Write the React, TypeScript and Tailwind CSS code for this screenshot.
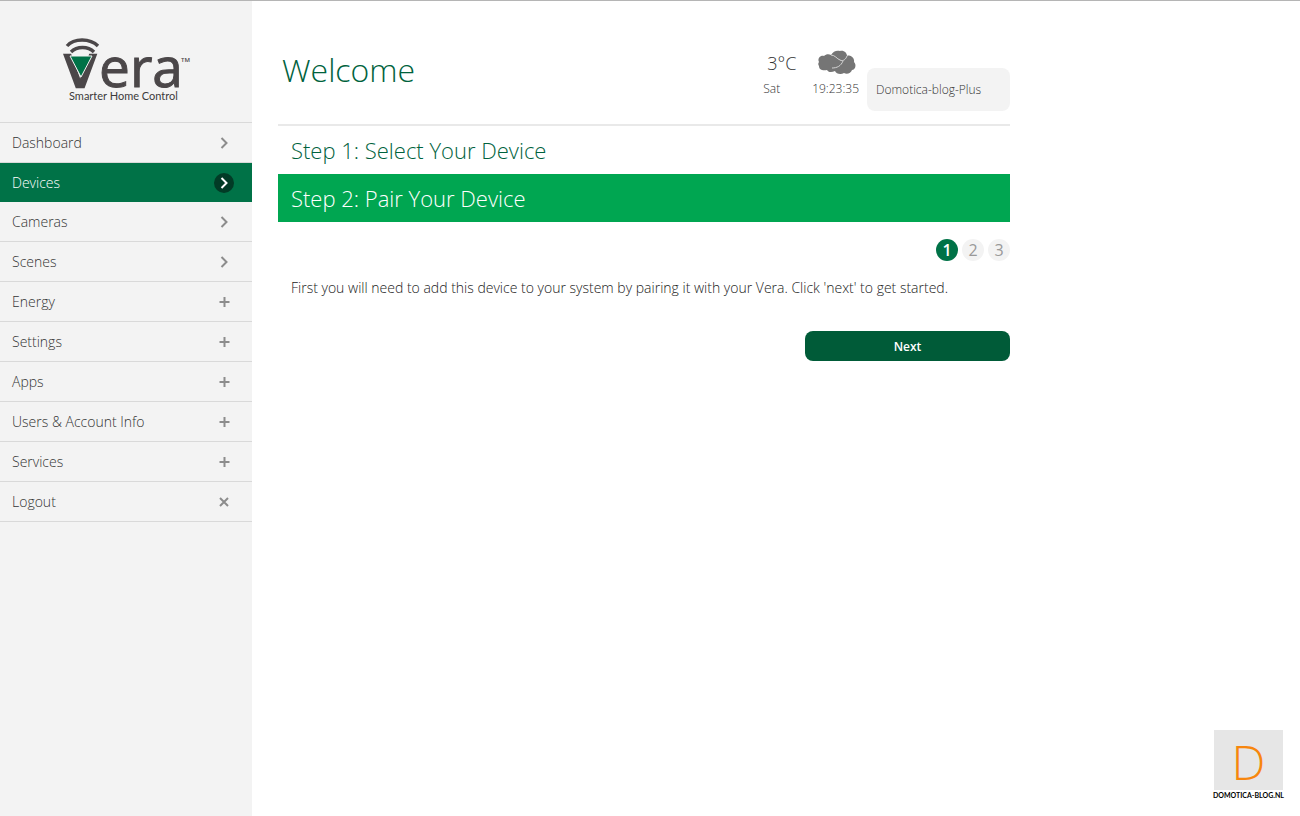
import clsx from "clsx";

type NavIcon = "arrow" | "plus" | "close";

interface NavItem {
  label: string;
  icon: NavIcon;
  active?: boolean;
}

const navItems: NavItem[] = [
  { label: "Dashboard", icon: "arrow" },
  { label: "Devices", icon: "arrow", active: true },
  { label: "Cameras", icon: "arrow" },
  { label: "Scenes", icon: "arrow" },
  { label: "Energy", icon: "plus" },
  { label: "Settings", icon: "plus" },
  { label: "Apps", icon: "plus" },
  { label: "Users & Account Info", icon: "plus" },
  { label: "Services", icon: "plus" },
  { label: "Logout", icon: "close" },
];

const iconPaths: Record<NavIcon, string> = {
  arrow: "M7.5 5 L12.5 10 L7.5 15",
  plus: "M10.5 5 V15 M5.5 10 H15.5",
  close: "M6 6 L14 14 M14 6 L6 14",
};

function VeraLogo() {
  return (
    <svg
      width="130"
      height="66"
      viewBox="0 0 130 66"
      className="overflow-visible"
      role="img"
      aria-label="Vera Smarter Home Control"
    >
      {/* Signal waves */}
      <g fill="none" stroke="#4b4749" strokeWidth="3.4">
        <path d="M6 9 C13 1 29 1 37 9" />
        <path d="M10 15 C16 9 27 9 33 15" />
      </g>
      <g fill="#4b4749" stroke="#4b4749" fontWeight="400">
        <text x="2" y="50" fontFamily="DejaVu Sans" fontSize="58" strokeWidth="2.4">v</text>
        <text x="38" y="50" fontFamily="Open Sans" fontSize="55" strokeWidth="1">era</text>
      </g>
      <path d="M9 19 H31 L20 40 Z" fill="#007247" stroke="#f3f3f3" strokeWidth="1" />
      <text x="120" y="25" fontFamily="Open Sans" fontSize="6" fontWeight="600" fill="#4b4749">TM</text>
      <text x="8" y="63" fontFamily="Lato" fontSize="11" fontWeight="400" fill="#3c3a3b">Smarter Home Control</text>
    </svg>
  );
}

function CloudIcon() {
  return (
    <svg width="40" height="26" viewBox="0 0 40 26" aria-hidden="true">
      <path
        d="M2 12 C0 8 4 5 7 6 C9 4 12 4 14 5 C16 1 20 0 23 1 C27 0 30 3 30 6 C34 4 38 9 37 12 C40 15 38 20 35 20 C34 23 30 25 27 23 C24 25 19 24 18 21 C14 23 11 22 10 20 C6 21 2 20 2 16 C1 15 1 13 2 12 Z"
        fill="#757575"
      />
      <path d="M14 5 C18 5 20 9 23 10 C26 12 29 9 30 6 M26 11 C24 16 20 18 15 18" fill="none" stroke="#d4d4d4" strokeWidth="1" />
    </svg>
  );
}

function NavRow({ label, icon, active }: NavItem) {
  return (
    <li className={clsx(!active && "border-b border-[#d9d9d9]")}>
      <a
        href="#"
        className={clsx(
          "flex h-[39px] items-center justify-between pl-3 pr-[18px] text-sm",
          active ? "bg-[#007247] text-white" : "text-[#333333]"
        )}
      >
        {label}
        <span className={clsx("flex size-5 items-center justify-center rounded-full", active && "bg-[#023b26]")}>
          <svg
            width="20"
            height="20"
            viewBox="0 0 20 20"
            fill="none"
            stroke={active ? "#ffffff" : "#8c8c8c"}
            strokeWidth="2"
            aria-hidden="true"
          >
            <path d={iconPaths[icon]} />
          </svg>
        </span>
      </a>
    </li>
  );
}

function Sidebar() {
  return (
    <aside className="w-[252px] shrink-0 bg-[#f3f3f3]">
      <div className="flex justify-center pt-9 pb-[19px]">
        <VeraLogo />
      </div>
      <nav>
        <ul className="border-t border-[#d9d9d9]">
          {navItems.map((item) => (
            <NavRow key={item.label} {...item} />
          ))}
        </ul>
      </nav>
    </aside>
  );
}

function Header() {
  return (
    <header className="flex items-start justify-between border-b-2 border-[#e9e9e9] pb-[13px]">
      <h1 className="pl-1 pt-11 text-[32px] leading-[50px] text-[#00623d]">Welcome</h1>
      <div className="flex items-end pt-11">
        <div className="flex flex-col pb-[14px] pr-2 text-xs text-[#333333]">
          <div className="flex items-center justify-between pl-1 pr-0.5">
            <span className="text-lg leading-9">3°C</span>
            <CloudIcon />
          </div>
          <div className="flex justify-between gap-8">
            <span>Sat</span>
            <span>19:23:35</span>
          </div>
        </div>
        <div className="flex h-[43px] w-[143px] items-center rounded-lg bg-[#f3f3f3] px-[9px] text-xs text-[#333333]">
          Domotica-blog-Plus
        </div>
      </div>
    </header>
  );
}

function Pager() {
  return (
    <ol className="flex justify-end gap-1 pt-[17px] text-base leading-[22px]">
      {[1, 2, 3].map((page) => (
        <li
          key={page}
          className={clsx(
            "size-[22px] rounded-full text-center",
            page === 1 ? "bg-[#007247] font-semibold text-white" : "bg-[#f3f3f3] font-normal text-[#999999]"
          )}
        >
          {page}
        </li>
      ))}
    </ol>
  );
}

export default function App() {
  return (
    <div className="flex min-h-screen border-t border-[#b5b5b5] bg-white font-['Open_Sans',sans-serif] font-light">
      <Sidebar />
      <main className="flex grow flex-col pl-[26px] pr-[17px]">
        <div className="w-full max-w-[732px]">
          <Header />
          <h2 className="px-[13px] text-[22px] leading-[48px] text-[#00623d]">Step 1: Select Your Device</h2>
          <h2 className="bg-[#00a651] px-[13px] text-[22px] leading-[48px] text-white">Step 2: Pair Your Device</h2>
          <Pager />
          <p className="px-[13px] pt-4 text-sm leading-[22px] text-[#222222]">
            First you will need to add this device to your system by pairing it with your Vera. Click 'next' to get started.
          </p>
          <div className="flex justify-end pt-8">
            <button type="button" className="h-[30px] w-[205px] rounded-lg bg-[#005b38] pt-0.5 text-xs font-semibold text-white">
              Next
            </button>
          </div>
        </div>
        <footer className="mt-auto self-end pb-4 text-center">
          <a href="#" className="flex w-[69px] flex-col items-center">
            <span className="h-[60px] w-full bg-[#e6e6e6] text-5xl leading-[64px] text-[#f7860d]">D</span>
            <span className="whitespace-nowrap font-['Lato',sans-serif] text-[7px] font-bold leading-[10px] text-black">
              DOMOTICA-BLOG.NL
            </span>
          </a>
        </footer>
      </main>
    </div>
  );
}
